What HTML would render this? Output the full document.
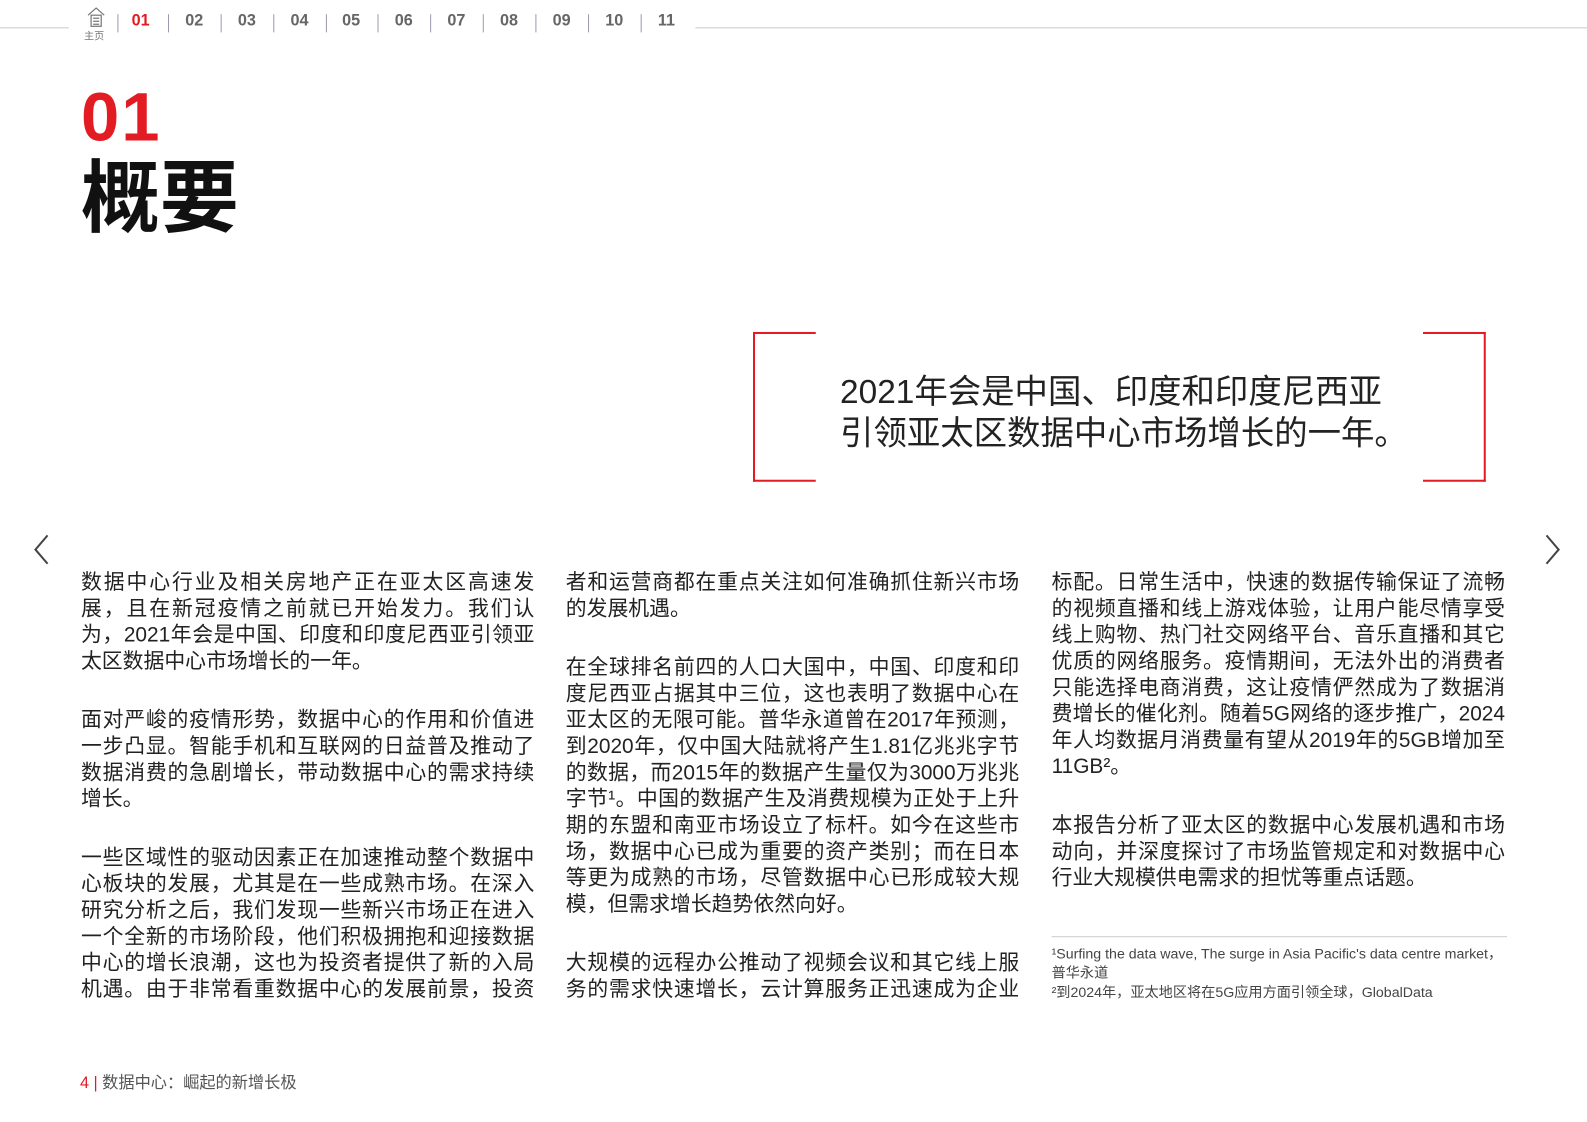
<!DOCTYPE html>
<html><head><meta charset="utf-8"><style>
*{margin:0;padding:0;box-sizing:border-box}
body{width:1587px;height:1122px;background:#fff;position:relative;overflow:hidden;font-family:"Liberation Sans","Noto Sans CJK SC",sans-serif;color:#222}
#w{position:absolute;left:0;top:0;width:1568px;height:1109px;transform:scale(1.0121);transform-origin:0 0}
.nav{position:absolute;top:12px;left:0;height:24px}
.nav span{position:absolute;font-size:16px;font-weight:bold;color:#666;top:0}
.sep{position:absolute;top:14px;width:1px;height:18px;background:#9a9ab0}
.hl{position:absolute;top:27px;height:1px;background:#ccc}
.col{position:absolute;width:448px;font-size:20.6px;line-height:26px;color:#222}
.col .ln{text-align:justify;text-align-last:justify;white-space:nowrap}
.col .ln.l{text-align-last:left}
.col .pa{margin-bottom:32px}
.br{position:absolute;border:2px solid #e31b23}
</style></head><body><div id="w">
<div class="hl" style="left:0;width:68px"></div>
<div class="hl" style="left:687px;width:900px"></div>
<svg style="position:absolute;left:85px;top:6px" width="20" height="22" viewBox="0 0 20 22" fill="none" stroke="#777" stroke-width="1.2"><path d="M2 9 L10 2 L18 9"/><rect x="5" y="9" width="10" height="11"/><path d="M7 12h6M7 15h6M7 18h6"/></svg>
<div style="position:absolute;left:83px;top:27px;font-size:10px;color:#777">主页</div>
<div class="sep" style="left:116px"></div>
<div class="nav">
<span style="left:130px;color:#e31b23">01</span>
<span style="left:183px">02</span><span style="left:235px">03</span><span style="left:287px">04</span><span style="left:338px">05</span><span style="left:390px">06</span><span style="left:442px">07</span><span style="left:494px">08</span><span style="left:546px">09</span><span style="left:598px">10</span><span style="left:650px">11</span>
</div>
<div class="sep" style="left:166px"></div><div class="sep" style="left:218px"></div><div class="sep" style="left:270px"></div><div class="sep" style="left:322px"></div><div class="sep" style="left:373px"></div><div class="sep" style="left:425px"></div><div class="sep" style="left:477px"></div><div class="sep" style="left:529px"></div><div class="sep" style="left:581px"></div><div class="sep" style="left:633px"></div>

<div style="position:absolute;left:80px;top:76px;font-size:68px;font-weight:bold;color:#e31b23;line-height:80px;letter-spacing:2px">01</div>
<div style="position:absolute;left:80px;top:150px;font-size:78px;font-weight:bold;color:#111;line-height:92px">概要</div>

<div class="br" style="left:744px;top:328px;width:62px;height:148px;border-right:none"></div>
<div class="br" style="left:1406px;top:328px;width:62px;height:148px;border-left:none"></div>
<div style="position:absolute;left:830px;top:366px;font-size:33px;line-height:41px;color:#222">2021年会是中国、印度和印度尼西亚<br>引领亚太区数据中心市场增长的一年。</div>

<svg style="position:absolute;left:32px;top:527px" width="18" height="32" viewBox="0 0 18 32"><path d="M15 2 L3 16 L15 30" fill="none" stroke="#444" stroke-width="2"/></svg>
<svg style="position:absolute;left:1525px;top:527px" width="18" height="32" viewBox="0 0 18 32"><path d="M3 2 L15 16 L3 30" fill="none" stroke="#444" stroke-width="2"/></svg>

<div class="col" style="left:80px;top:563px">
<div class="pa"><div class="ln">数据中心行业及相关房地产正在亚太区高速发</div><div class="ln">展，且在新冠疫情之前就已开始发力。我们认</div><div class="ln">为，2021年会是中国、印度和印度尼西亚引领亚</div><div class="ln l">太区数据中心市场增长的一年。</div></div>
<div class="pa"><div class="ln">面对严峻的疫情形势，数据中心的作用和价值进</div><div class="ln">一步凸显。智能手机和互联网的日益普及推动了</div><div class="ln">数据消费的急剧增长，带动数据中心的需求持续</div><div class="ln l">增长。</div></div>
<div class="pa"><div class="ln">一些区域性的驱动因素正在加速推动整个数据中</div><div class="ln">心板块的发展，尤其是在一些成熟市场。在深入</div><div class="ln">研究分析之后，我们发现一些新兴市场正在进入</div><div class="ln">一个全新的市场阶段，他们积极拥抱和迎接数据</div><div class="ln">中心的增长浪潮，这也为投资者提供了新的入局</div><div class="ln">机遇。由于非常看重数据中心的发展前景，投资</div></div>
</div>
<div class="col" style="left:559px;top:563px">
<div class="pa"><div class="ln">者和运营商都在重点关注如何准确抓住新兴市场</div><div class="ln l">的发展机遇。</div></div>
<div class="pa"><div class="ln">在全球排名前四的人口大国中，中国、印度和印</div><div class="ln">度尼西亚占据其中三位，这也表明了数据中心在</div><div class="ln">亚太区的无限可能。普华永道曾在2017年预测，</div><div class="ln">到2020年，仅中国大陆就将产生1.81亿兆兆字节</div><div class="ln">的数据，而2015年的数据产生量仅为3000万兆兆</div><div class="ln">字节¹。中国的数据产生及消费规模为正处于上升</div><div class="ln">期的东盟和南亚市场设立了标杆。如今在这些市</div><div class="ln">场，数据中心已成为重要的资产类别；而在日本</div><div class="ln">等更为成熟的市场，尽管数据中心已形成较大规</div><div class="ln l">模，但需求增长趋势依然向好。</div></div>
<div class="pa"><div class="ln">大规模的远程办公推动了视频会议和其它线上服</div><div class="ln">务的需求快速增长，云计算服务正迅速成为企业</div></div>
</div>
<div class="col" style="left:1039px;top:563px">
<div class="pa"><div class="ln">标配。日常生活中，快速的数据传输保证了流畅</div><div class="ln">的视频直播和线上游戏体验，让用户能尽情享受</div><div class="ln">线上购物、热门社交网络平台、音乐直播和其它</div><div class="ln">优质的网络服务。疫情期间，无法外出的消费者</div><div class="ln">只能选择电商消费，这让疫情俨然成为了数据消</div><div class="ln">费增长的催化剂。随着5G网络的逐步推广，2024</div><div class="ln">年人均数据月消费量有望从2019年的5GB增加至</div><div class="ln l">11GB²。</div></div>
<div class="pa"><div class="ln">本报告分析了亚太区的数据中心发展机遇和市场</div><div class="ln">动向，并深度探讨了市场监管规定和对数据中心</div><div class="ln l">行业大规模供电需求的担忧等重点话题。</div></div>
</div>
<div style="position:absolute;left:1039px;top:925px;width:450px;height:1px;background:#ccc"></div>
<div style="position:absolute;left:1039px;top:933px;font-size:14px;line-height:19px;color:#444">¹Surfing the data wave, The surge in Asia Pacific's data centre market，<br>普华永道<br>²到2024年，亚太地区将在5G应用方面引领全球，GlobalData</div>

<div style="position:absolute;left:79px;top:1056px;font-size:16px;color:#555"><span style="color:#e31b23">4</span> <span style="color:#e31b23">|</span> 数据中心：崛起的新增长极</div>
</div></body></html>
